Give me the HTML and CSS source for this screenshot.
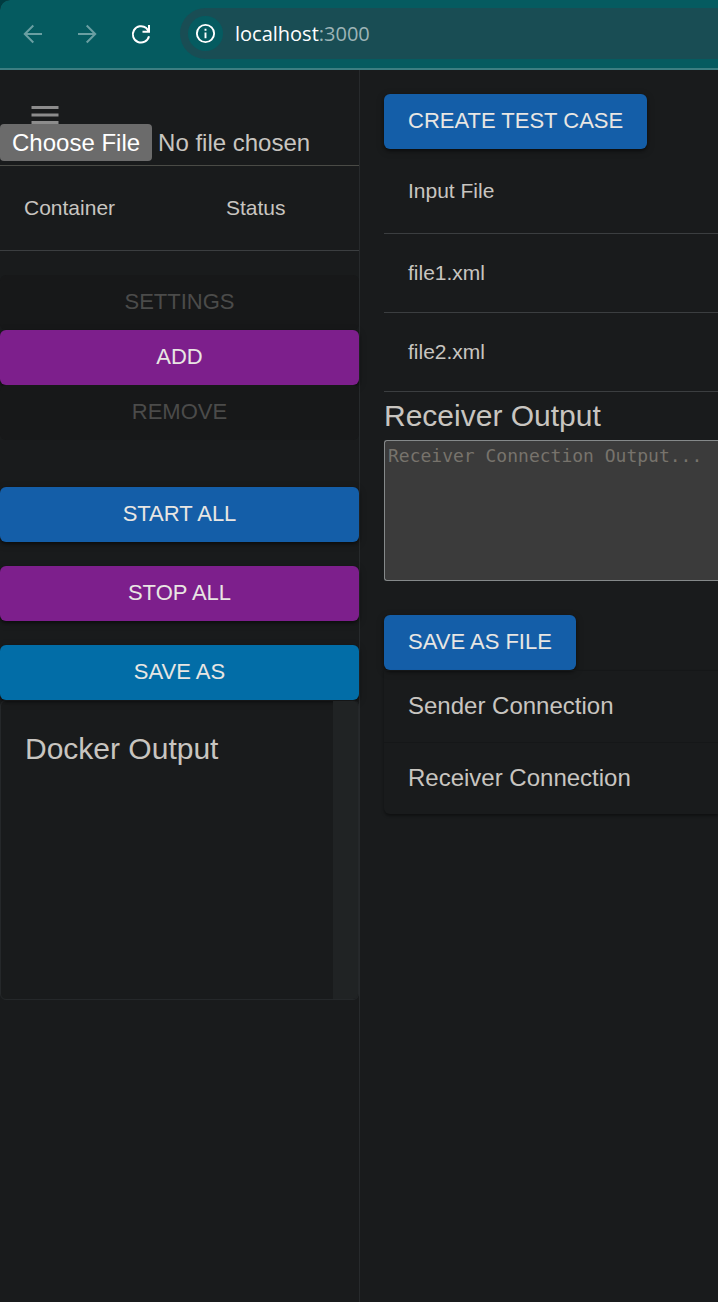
FILE: index.html
```html
<!DOCTYPE html>
<html lang="en">
<head>
<meta charset="utf-8">
<title>localhost:3000</title>
<link rel="stylesheet" href="styles.css">
</head>
<body>
<div class="window">
  <header class="browser">
    <nav class="nav" aria-label="Browser">
      <button class="nav-btn dim" type="button" aria-label="Back"><svg viewBox="0 0 24 24"><path d="M21 12H4M12.300 3.500L3.800 12l8.500 8.500"/></svg></button>
      <button class="nav-btn dim" type="button" aria-label="Forward"><svg viewBox="0 0 24 24"><path d="M3 12h17M11.700 3.500l8.500 8.500-8.500 8.500"/></svg></button>
      <button class="nav-btn" type="button" aria-label="Reload"><svg viewBox="0 0 24 24"><path class="reload" d="M20 14.300A8.200 8.200 0 1 1 17.300 6.100L19.800 9M20 3v6.700H13.500"/></svg></button>
    </nav>
    <div class="address">
      <button class="info" type="button" aria-label="Site information"><svg viewBox="0 0 24 24"><circle cx="12" cy="12" r="9"/><path d="M12 11v6M12 7v2"/></svg></button>
      <span class="url"><span class="host">localhost</span>:3000</span>
    </div>
  </header>
  <div class="app">
    <aside class="sidebar">
      <div class="toolbar">
        <button class="menu" type="button" aria-label="Menu"><svg viewBox="0 0 24 18"><path d="M3 18h18v-2H3zM3 13h18v-2H3zM3 6v2h18V6z"/></svg></button>
      </div>
      <div class="file-row"><input class="file" type="file" aria-label="Choose File"></div>
      <table class="table containers">
        <thead><tr><th>Container</th><th>Status</th></tr></thead>
      </table>
      <div class="group">
        <button class="btn" type="button" disabled>SETTINGS</button>
        <button class="btn purple" type="button">ADD</button>
        <button class="btn" type="button" disabled>REMOVE</button>
      </div>
      <div class="group spaced">
        <button class="btn blue" type="button">START ALL</button>
        <button class="btn purple" type="button">STOP ALL</button>
        <button class="btn cyan" type="button">SAVE AS</button>
      </div>
      <section class="docker">
        <h2 class="heading docker-title">Docker Output</h2>
        <div class="track"></div>
      </section>
    </aside>
    <main class="main">
      <button class="btn blue" type="button">CREATE TEST CASE</button>
      <table class="table">
        <thead><tr><th>Input File</th></tr></thead>
        <tbody><tr><td>file1.xml</td></tr><tr><td>file2.xml</td></tr></tbody>
      </table>
      <label class="heading" for="receiver">Receiver Output</label>
      <textarea class="output" id="receiver" placeholder="Receiver Connection Output..."></textarea>
      <button class="btn blue" type="button">SAVE AS FILE</button>
      <div class="accordion">
        <details><summary>Sender Connection</summary></details>
        <details><summary>Receiver Connection</summary></details>
      </div>
    </main>
  </div>
</div>
</body>
</html>
```
FILE: styles.css
```css
* { box-sizing: border-box; }

body {
  margin: 0;
  background: #003c41;
  color: #c8c5c0;
  font-family: "Liberation Sans", Arial, sans-serif;
  font-size: 21px;
}

button { font: inherit; color: inherit; border: 0; padding: 0; background: none; }
svg { display: block; fill: none; stroke: currentColor; stroke-width: 2; }

.window {
  display: flex;
  flex-direction: column;
  min-height: 100vh;
  background: #191b1c;
  border-top-left-radius: 10px;
  overflow: hidden;
}

.browser {
  display: flex;
  align-items: center;
  gap: 27px;
  padding: 8px 0 9px 21px;
  background: #055b60;
  border-bottom: 2px solid #3c7e82;
}
.nav { display: flex; gap: 30px; }
.nav-btn { color: #fff; }
.nav-btn svg { width: 24px; height: 24px; }
.nav-btn.dim { color: #6a9fa2; }
.address {
  flex: 1;
  display: flex;
  align-items: center;
  gap: 12px;
  padding: 8px;
  background: #194d54;
  border-radius: 26px 0 0 26px;
}
.info {
  display: grid;
  place-items: center;
  width: 35px;
  height: 35px;
  border-radius: 50%;
  background: #055b60;
  color: #fff;
}
.info svg { width: 23px; height: 23px; }
.url { font: 20px/28px "Open Sans", "Noto Sans", sans-serif; color: #9db4b7; }
.host { color: #fff; }

.app { flex: 1; display: flex; }
.sidebar { flex: 0 0 360px; border-right: 1px solid #272a2c; }
.main { flex: 1; min-width: 0; padding: 24px 0 24px 24px; }

.toolbar { padding: 27px 27px 0; }
.menu { display: block; color: #8c8c8c; }
.menu svg { width: 36px; height: 27px; fill: currentColor; stroke: none; }
.file-row { padding-bottom: 4px; border-bottom: 1px solid #4a4b46; }
.file { display: block; width: 100%; font: 24px/27px "Liberation Sans", Arial, sans-serif; color: #c8c5c0; }
.file::file-selector-button {
  margin: 0 6px 0 0;
  padding: 5px 12px;
  border: 0;
  border-radius: 4px;
  background: #6b6b6b;
  color: #fff;
  font: inherit;
}

.table { width: 100%; border-collapse: separate; border-spacing: 0; line-height: 30px; }
.table th, .table td { padding: 24px; border-bottom: 1px solid #3b3e40; font-weight: 400; text-align: left; }
.table th { line-height: 36px; }
.containers th:first-child { width: 202px; }

.btn {
  display: block;
  padding: 8px 24px 10px;
  border-radius: 6px;
  color: #e8e6e3;
  font-size: 22px;
  line-height: 37px;
  box-shadow: 0 2px 3px rgba(0, 0, 0, .4), 0 2px 8px rgba(0, 0, 0, .2);
}
.btn:disabled { background: #171819; color: #4b4b4a; box-shadow: none; }
.btn.purple { background: #7d1f8c; }
.btn.blue { background: #145ea8; }
.btn.cyan { background: #026da7; }

.group { display: flex; flex-direction: column; padding-top: 24px; }
.group.spaced { gap: 24px; padding-top: 47px; }

.heading { display: block; margin: 0; font-size: 30px; font-weight: 400; line-height: 48px; }
.docker {
  display: flex;
  justify-content: space-between;
  height: 300px;
  border: 1px solid #25282a;
  border-radius: 6px;
  overflow: hidden;
}
.docker-title { padding: 24px; }
.track { width: 25px; background: #202324; }

.output {
  display: block;
  width: 100%;
  height: 141px;
  margin-bottom: 34px;
  padding: 3px;
  border: 1px solid #85898a;
  border-right: 0;
  border-radius: 3px 0 0 3px;
  background: #3b3b3b;
  color: #e8e6e3;
  font: 18px/24px "DejaVu Sans Mono", monospace;
  resize: none;
}
.output::placeholder { color: #77736c; }

.accordion { border-radius: 0 0 0 6px; box-shadow: 0 2px 3px rgba(0, 0, 0, .4); }
.accordion summary {
  padding: 17px 24px 19px;
  border-top: 1px solid #151718;
  font-size: 24px;
  line-height: 35px;
  list-style: none;
}
```
